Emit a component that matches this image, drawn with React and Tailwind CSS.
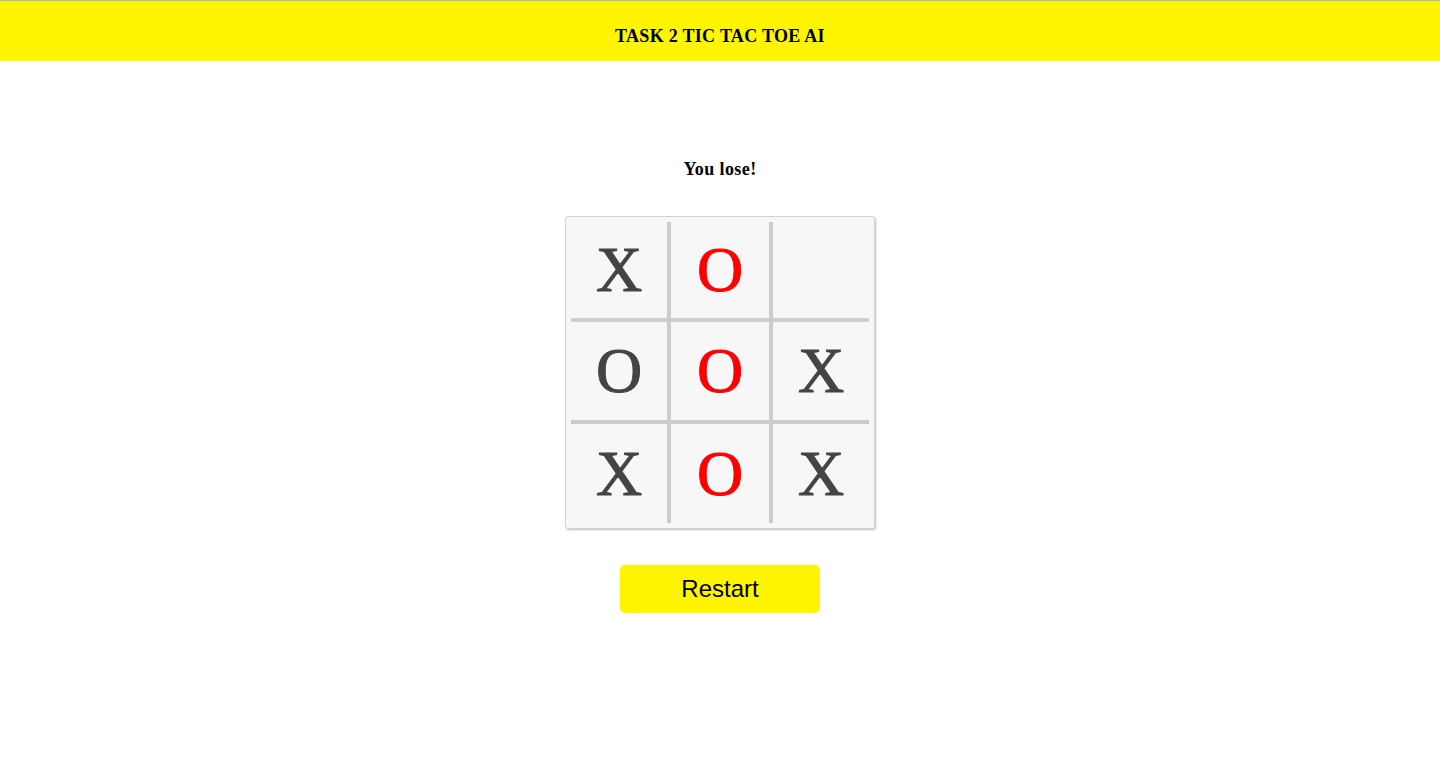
import React, { useState } from 'react'

const START = ['X', 'O', '', 'O', 'O', 'X', 'X', 'O', 'X']
const WIN = [1, 4, 7]

const Cell = ({ value, index, win }) => {
    const col = index % 3
    const row = Math.floor(index / 3)
    return (
        <div
            className={`flex items-center justify-center ${
                col < 2 ? 'border-r-4 border-r-[#cccccc]' : ''
            } ${row < 2 ? 'border-b-4 border-b-[#cccccc]' : ''} ${
                col === 1 ? 'w-[102px]' : col === 0 ? 'w-[100px]' : 'w-[96px]'
            } ${row === 0 ? 'h-[100px]' : row === 1 ? 'h-[102px]' : 'h-[99px]'}`}
        >
            <span
                className={`text-[64px] leading-none [-webkit-text-stroke:1px_currentColor] ${
                    win ? 'text-[#ff0000]' : 'text-[#444444]'
                }`}
            >
                {value}
            </span>
        </div>
    )
}

const App = () => {
    const [board, setBoard] = useState(START)
    const [status, setStatus] = useState('You lose!')

    const restart = () => {
        setBoard(Array(9).fill(''))
        setStatus('')
    }

    return (
        <div className="min-h-[784px] bg-white font-['Liberation_Serif',serif] text-black">
            <div className="flex h-[61px] items-center justify-center border-t border-t-[#9cb9c9] bg-[#fff500] pt-[10px]">
                <h1 className="text-[18px] font-bold tracking-[0.3px]">TASK 2 TIC TAC TOE AI</h1>
            </div>

            <div className="flex flex-col items-center">
                <p className="mt-[98px] h-[20px] text-[18px] font-bold leading-[20px] tracking-[0.4px]">{status}</p>

                {/* board */}
                <div className="mt-[37px] rounded-[3px] border border-[#d4d4d4] bg-[#f7f7f7] p-[5px] shadow-[1px_1px_2px_rgba(0,0,0,0.25)]">
                    <div className="grid grid-cols-[100px_102px_96px]">
                        {board.map((v, i) => (
                            <Cell key={i} value={v} index={i} win={WIN.includes(i)} />
                        ))}
                    </div>
                </div>

                <button
                    onClick={restart}
                    className="mt-[36px] h-[48px] w-[200px] rounded-[5px] bg-[#fff500] font-['Liberation_Sans',Arial,sans-serif] text-[24px] text-black"
                >
                    Restart
                </button>
            </div>
        </div>
    )
}

export default App
